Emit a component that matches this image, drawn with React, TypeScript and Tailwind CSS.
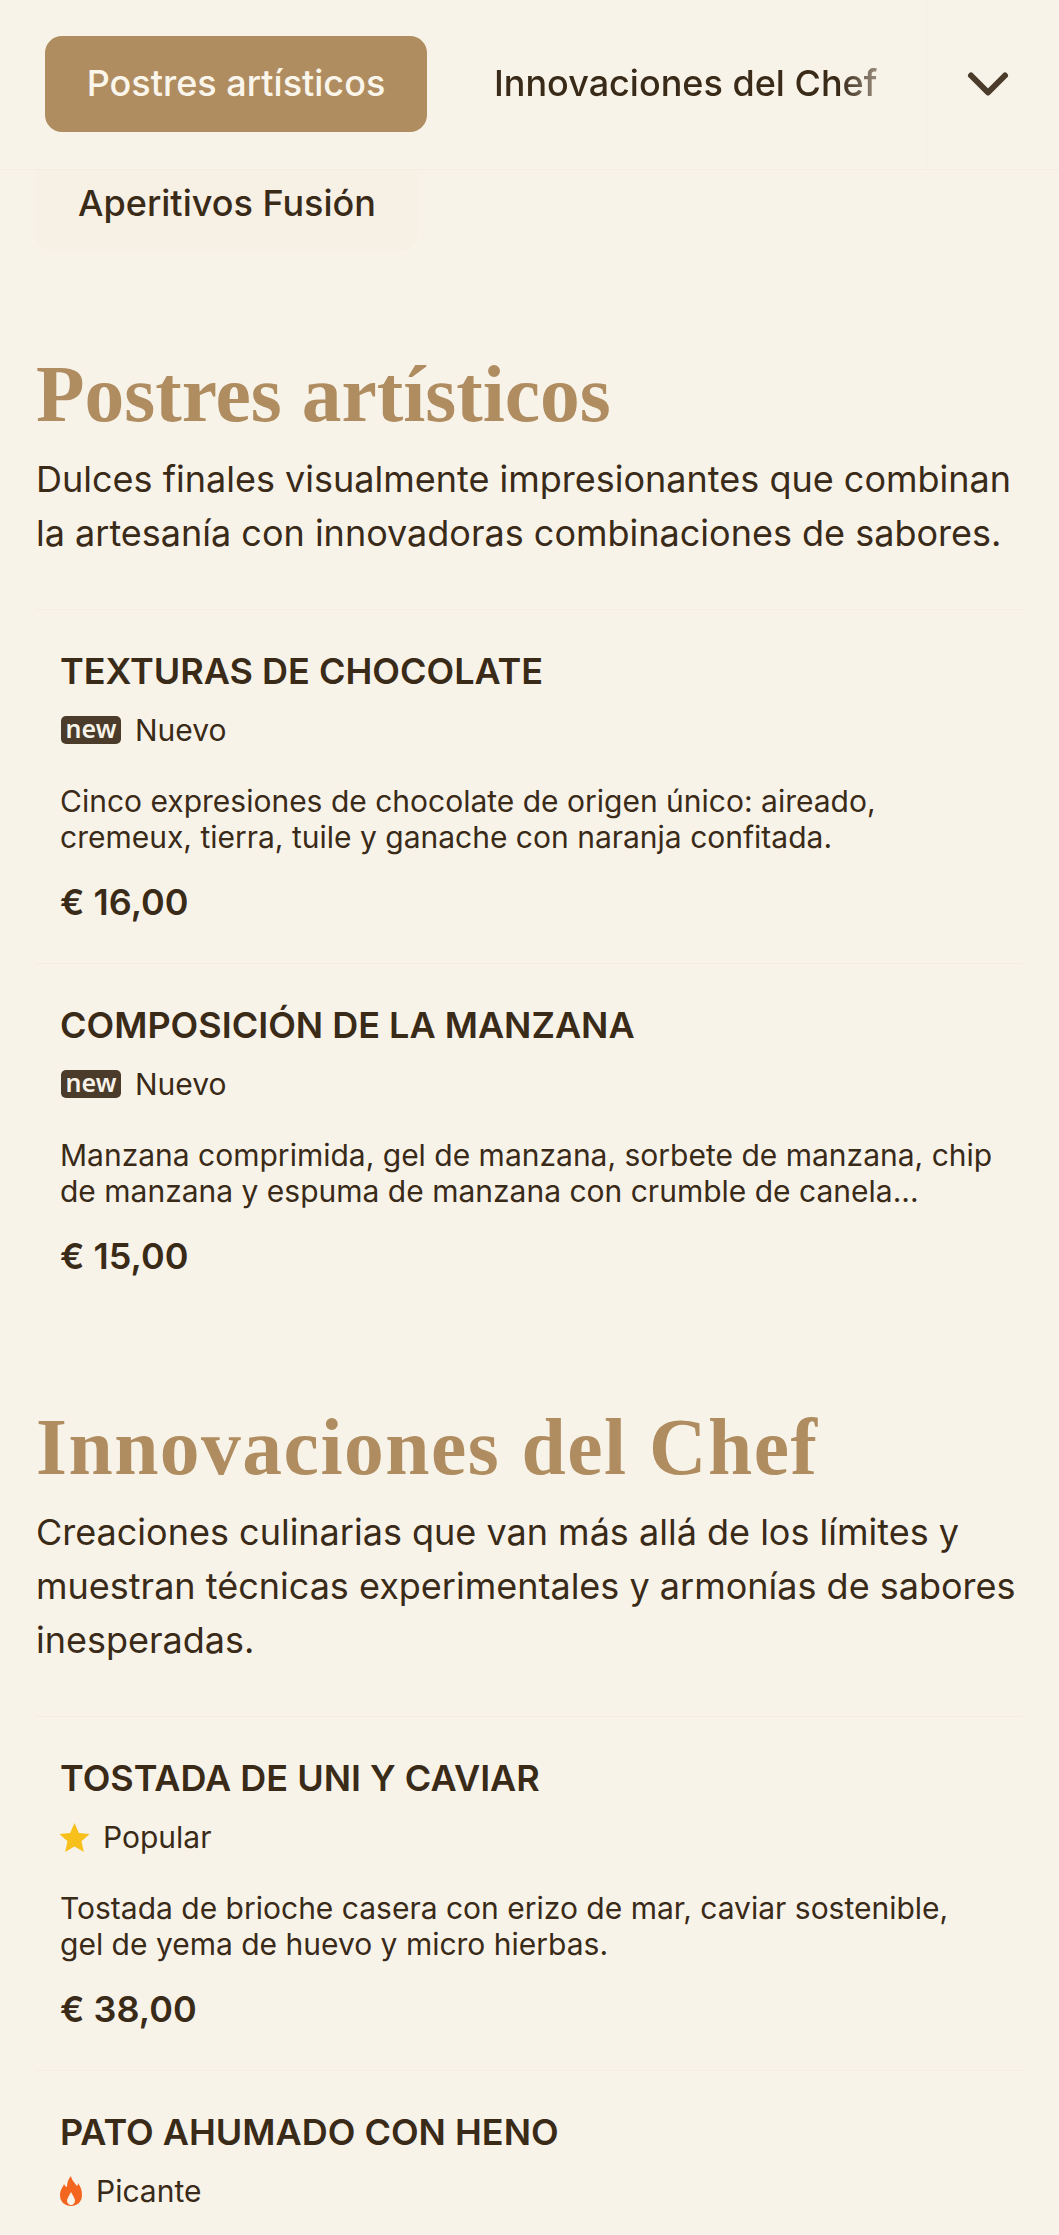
import React from 'react';
import { ChevronDown } from 'lucide-react';

const Tag = ({ kind }: { kind: string }) => {
    if (kind === 'new') {
        return (
            <div className="flex items-center h-[40px]">
                <span className="w-[60px] h-[28px] ml-[1px] mr-[14px] bg-[#4a3b2a] rounded-[5px] flex items-center justify-center text-[#f8f3e9] text-[25px] font-semibold leading-none font-['Noto_Sans',sans-serif] pb-[4px]">
                    new
                </span>
                <span className="text-[30px]">Nuevo</span>
            </div>
        );
    }
    if (kind === 'popular') {
        return (
            <div className="flex items-center h-[40px]">
                <svg viewBox="0 0 24 24" className="w-[33px] h-[33px] mr-[12px] -ml-[2px] fill-[#f7c01b]">
                    <path d="M12 1.5l3.2 7.2 7.8.8-5.9 5.2 1.7 7.8L12 18.5l-6.8 4 1.7-7.8L1 9.5l7.8-.8z" />
                </svg>
                <span className="text-[30px]">Popular</span>
            </div>
        );
    }
    return (
        <div className="flex items-center h-[40px]">
            <svg viewBox="0 0 22 30" className="w-[22px] h-[30px] mr-[14px] fill-[#f4651f]">
                <path
                    fillRule="evenodd"
                    d="M11 0C12 5 15 7 17 10C18 9 18 8 18 7C21 11 22 15 22 19C22 26 17 30 11 30C5 30 0 26 0 19C0 14 3 11 4 8C5 10 6 11 7 11C7 7 8 3 11 0ZM11 16C9 20 7 22 7 25C7 27 9 29 11 29C13 29 15 27 15 25C15 22 13 20 11 16Z"
                />
            </svg>
            <span className="text-[30px]">Picante</span>
        </div>
    );
};

const Dish = ({ name, tag, desc, price }: { name: string; tag: string; desc?: string[]; price?: string }) => (
    <div className="mx-[36px] px-[24px] pt-[39px] pb-[39px] border-t border-[#f3ede2]">
        <h3 className="text-[36px] leading-[44px] font-semibold">{name}</h3>
        <div className="mt-[17px]">
            <Tag kind={tag} />
        </div>
        {desc && (
            <p className="mt-[33px] text-[30px] leading-[36px]">
                {desc[0]}
                <br />
                {desc[1]}
            </p>
        )}
        {price && <div className="mt-[25px] text-[36px] leading-[44px] font-semibold">{price}</div>}
    </div>
);

const SectionHead = ({ title, lines, wide }: { title: string; lines: string[]; wide?: boolean }) => (
    <div className="mx-[36px] mb-[49px]">
        <h2
            className={
                wide
                    ? "text-[79.5px] leading-[84px] tracking-[1.5px] font-bold text-[#b08d60] font-['Liberation_Serif',serif]"
                    : "text-[79.5px] leading-[84px] font-bold text-[#b08d60] font-['Liberation_Serif',serif]"
            }
        >
            {title}
        </h2>
        <p className="mt-[16px] text-[36px] leading-[54px]">
            {lines.map((l) => (
                <span key={l} className="block whitespace-nowrap">
                    {l}
                </span>
            ))}
        </p>
    </div>
);

export default function App() {
    return (
        <div className="w-[1059px] h-[2235px] overflow-hidden bg-[#f8f3e9] text-[#3a2a18] font-['Inter',sans-serif]">
            <header className="h-[170px] flex border-b border-[#f3ede2]">
                <nav className="w-[927px] pl-[45px] pt-[36px] flex gap-[24px] overflow-hidden">
                    <div className="w-[382px] h-[96px] shrink-0 rounded-[17px] bg-[#b08d60] text-[#fbf6ec] text-[36px] font-medium pb-[2px] flex items-center justify-center">
                        Postres artísticos
                    </div>
                    <div className="h-[96px] pl-[43px] pb-[2px] w-[482px] shrink-0 text-[36px] font-medium flex items-center whitespace-nowrap [mask-image:linear-gradient(to_right,black_389px,transparent_465px)]">
                        Innovaciones del Chef
                    </div>
                </nav>
                <div className="flex-1 flex items-start justify-center border-l border-[#f6f1e6] pt-[50px] pr-[12px]">
                    <ChevronDown size={68} strokeWidth={2.1} className="text-[#4a3b2a]" />
                </div>
            </header>
            <div className="ml-[36px] w-[381px] h-[81px] rounded-b-[16px] bg-[#f6f0e5] pl-[42px] pt-[11px] text-[36px] font-medium leading-[44px]">
                Aperitivos Fusión
            </div>

            <div className="mt-[101px]">
                <SectionHead
                    title="Postres artísticos"
                    lines={[
                        'Dulces finales visualmente impresionantes que combinan',
                        'la artesanía con innovadoras combinaciones de sabores.',
                    ]}
                />
                <Dish
                    name="TEXTURAS DE CHOCOLATE"
                    tag="new"
                    desc={[
                        'Cinco expresiones de chocolate de origen único: aireado,',
                        'cremeux, tierra, tuile y ganache con naranja confitada.',
                    ]}
                    price="€ 16,00"
                />
                <Dish
                    name="COMPOSICIÓN DE LA MANZANA"
                    tag="new"
                    desc={[
                        'Manzana comprimida, gel de manzana, sorbete de manzana, chip',
                        'de manzana y espuma de manzana con crumble de canela...',
                    ]}
                    price="€ 15,00"
                />
            </div>

            <div className="mt-[88px]">
                <SectionHead
                    wide
                    title="Innovaciones del Chef"
                    lines={[
                        'Creaciones culinarias que van más allá de los límites y',
                        'muestran técnicas experimentales y armonías de sabores',
                        'inesperadas.',
                    ]}
                />
                <Dish
                    name="TOSTADA DE UNI Y CAVIAR"
                    tag="popular"
                    desc={[
                        'Tostada de brioche casera con erizo de mar, caviar sostenible,',
                        'gel de yema de huevo y micro hierbas.',
                    ]}
                    price="€ 38,00"
                />
                <Dish name="PATO AHUMADO CON HENO" tag="picante" />
            </div>
        </div>
    );
}
